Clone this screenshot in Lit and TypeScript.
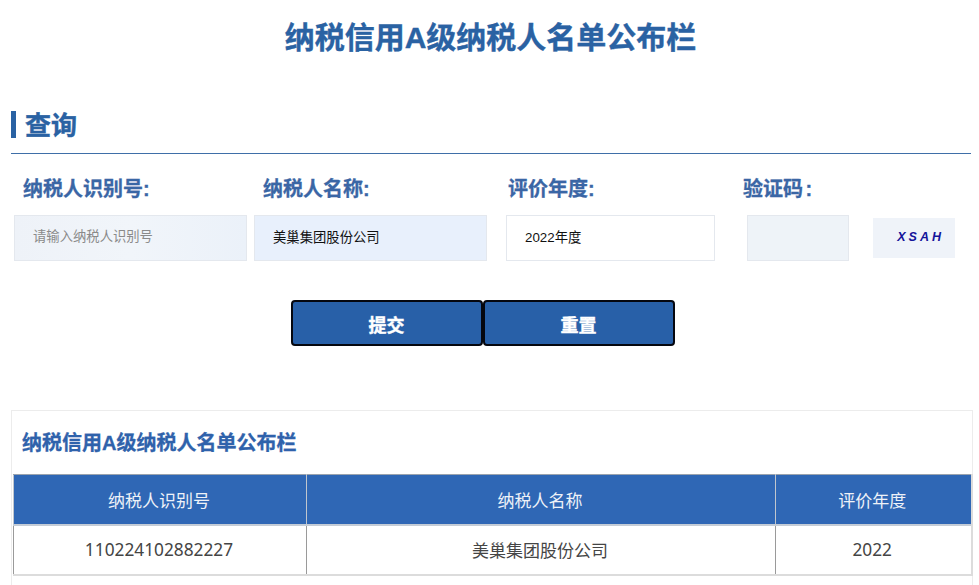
import { LitElement, html, css } from "lit";
import { customElement } from "lit/decorators.js";

@customElement("app-root")
export class AppRoot extends LitElement {
  static styles = css`
    :host {
      display: block;
      width: 979px;
      height: 585px;
      overflow: hidden;
      background: #fff;
      font-family: "Liberation Sans", "Noto Sans CJK SC", sans-serif;
      box-sizing: border-box;
    }
    * { box-sizing: border-box; }
    h1 {
      margin: 0;
      height: 76px;
      padding: 16px 0 0 2px;
      font-size: 30px;
      line-height: 44px;
      font-weight: 700;
      color: #2a62a3;
      text-align: center;
      -webkit-text-stroke: 0.4px #2a62a3;
    }
    .query-head {
      margin: 35px 8px 0 11px;
      height: 43px;
      border-bottom: 1px solid #3f6fa8;
      display: flex;
      align-items: flex-start;
      gap: 9px;
    }
    .bar { width: 5px; height: 27px; background: #2a62a3; }
    .query-head h2 {
      margin: 1px 0 0;
      font-size: 26px;
      line-height: 28px;
      font-weight: 700;
      color: #2a62a3;
      -webkit-text-stroke: 0.4px #2a62a3;
    }
    .labels {
      display: grid;
      grid-template-columns: 240px 245px 235px auto;
      padding: 23px 0 0 23px;
      font-size: 20px;
      line-height: 24px;
      font-weight: 700;
      color: #3a66a5;
      height: 61px;
      -webkit-text-stroke: 0.3px #3a66a5;
      word-spacing: -3px;
    }
    .fields {
      display: flex;
      align-items: center;
      height: 46px;
      padding-left: 14px;
    }
    input {
      display: block;
      height: 46px;
      padding: 0 18px 3px;
      border: 1px solid #e4e8ee;
      border-radius: 0;
      outline: none;
      font: 13.33px "Liberation Sans", "Noto Sans CJK SC", sans-serif;
      color: #111;
      background: #fff;
    }
    input::placeholder { color: #8a8a8a; opacity: 1; }
    .f1 { width: 233px; margin-right: 7px; background: linear-gradient(90deg, #eef2f8, #f1f5fa 50%, #ebf1f9); }
    .f2 { width: 233px; margin-right: 19px; background: #e8f0fc; }
    .f3 { width: 209px; margin-right: 32px; }
    .f4 { width: 102px; margin-right: 24px; background: #eef3f8; }
    .captcha {
      width: 82px;
      height: 40px;
      background: #eff3f9;
      display: flex;
      align-items: center;
      justify-content: flex-end;
      padding: 0 11px 2px 0;
      font-size: 12.5px;
      font-weight: 700;
      font-style: italic;
      letter-spacing: 3px;
      color: #14149a;
    }
    .actions {
      display: flex;
      justify-content: center;
      margin: 39px 0 0 -14px;
    }
    button {
      width: 192px;
      height: 46px;
      border: 2px solid #05070f;
      border-radius: 4px;
      background: #2860a8;
      color: #fff;
      font: 700 18px "Liberation Sans", "Noto Sans CJK SC", sans-serif;
      -webkit-text-stroke: 0.4px #fff;
      padding: 2px 0 0;
    }
    .panel {
      margin: 64px 6px 0 11px;
      height: 200px;
      border: 1px solid #ececec;
      border-bottom: none;
      padding-left: 1px;
    }
    .panel h3 {
      margin: 0;
      height: 63px;
      padding: 17px 0 0 9px;
      font-size: 20px;
      line-height: 30px;
      font-weight: 700;
      color: #2f62ab;
      -webkit-text-stroke: 0.3px #2f62ab;
    }
    table {
      width: 958px;
      table-layout: fixed;
      border-collapse: collapse;
      font-size: 17px;
    }
    col.c1 { width: 293px; }
    col.c2 { width: 469px; }
    col.c3 { width: 196px; }
    th, td {
      height: 50px;
      padding: 0 2px 0 0;
      text-align: center;
      font-weight: 400;
      border: 1px solid #9a9a9a;
    }
    th {
      background: #2f67b5;
      color: #eef2f8;
      border-color: #c0c6ce;
      border-top-color: #9aa3ae;
    }
    th:last-child, td:last-child { border-right-color: #dcdcdc; border-right-width: 2px; }
    td { color: #454545; background: #fff; border-bottom: 2px solid #dcdcdc; border-top: 2px solid #c4ccd6; }
    td.num { font-family: "Noto Sans", "Noto Sans CJK SC", sans-serif; font-size: 17.3px; }
  `;

  render() {
    return html`
      <h1>纳税信用A级纳税人名单公布栏</h1>
      <div class="query-head">
        <span class="bar"></span>
        <h2>查询</h2>
      </div>
      <div class="labels">
        <span>纳税人识别号:</span>
        <span>纳税人名称:</span>
        <span>评价年度:</span>
        <span>验证码 :</span>
      </div>
      <div class="fields">
        <input class="f1" placeholder="请输入纳税人识别号" />
        <input class="f2" .value=${"美巢集团股份公司"} />
        <input class="f3" .value=${"2022年度"} />
        <input class="f4" />
        <div class="captcha">XSAH</div>
      </div>
      <div class="actions">
        <button>提交</button>
        <button>重置</button>
      </div>
      <section class="panel">
        <h3>纳税信用A级纳税人名单公布栏</h3>
        <table>
          <colgroup><col class="c1" /><col class="c2" /><col class="c3" /></colgroup>
          <thead>
            <tr><th>纳税人识别号</th><th>纳税人名称</th><th>评价年度</th></tr>
          </thead>
          <tbody>
            <tr>
              <td class="num">110224102882227</td>
              <td>美巢集团股份公司</td>
              <td class="num">2022</td>
            </tr>
          </tbody>
        </table>
      </section>
    `;
  }
}
